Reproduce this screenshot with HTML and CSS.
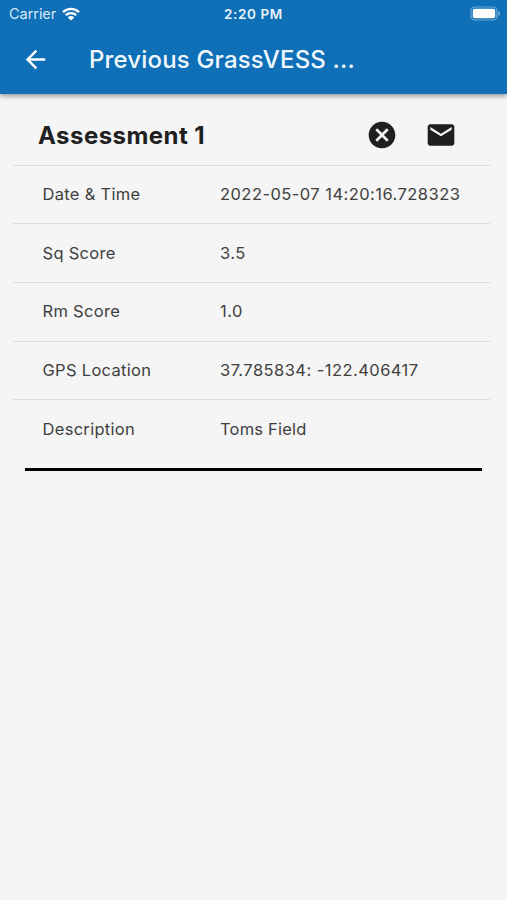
FILE: index.html
```html
<!DOCTYPE html>
<html lang="en">
<head>
    <meta charset="UTF-8">
    <meta name="viewport" content="width=device-width, initial-scale=1.0">
    <title>Previous GrassVESS Assessments</title>
    <link rel="stylesheet" href="styles.css">
</head>
<body>

<header class="app-header">
    <!-- Status bar -->
    <div class="status-bar">
        <div class="status-left">
            <span class="carrier">Carrier</span>
            <svg class="wifi" viewBox="0 0 18 14">
                <path d="M1 5.1a11.6 11.6 0 0 1 16 0M3.8 8.2a7.5 7.5 0 0 1 10.4 0" fill="none" stroke="#fff" stroke-width="2.3"/>
                <path d="M9 13.6 5.8 10.4a4.6 4.6 0 0 1 6.4 0z" fill="#fff"/>
            </svg>
        </div>
        <span class="clock">2:20 PM</span>
        <div class="status-right">
            <svg class="battery" viewBox="0 0 31 15">
                <rect x="1" y="1" width="26" height="13" rx="4" fill="none" stroke="#fff" stroke-opacity="0.4" stroke-width="1.2"/>
                <rect x="2.8" y="2.8" width="22.4" height="9.4" rx="2" fill="#fff"/>
                <path d="M28.4 5.2v4.6c1-.4 1.7-1.2 1.7-2.3s-.7-1.9-1.7-2.3z" fill="#fff" fill-opacity="0.5"/>
            </svg>
        </div>
    </div>

    <!-- Toolbar -->
    <div class="toolbar">
        <svg class="back-icon" viewBox="0 0 24 24">
            <path d="M20 11H7.83l5.59-5.59L12 4l-8 8 8 8 1.41-1.41L7.83 13H20v-2z"/>
        </svg>
        <h1 class="toolbar-title">Previous GrassVESS ...</h1>
    </div>
</header>

<main class="assessment">
    <div class="assessment-header">
        <h2 class="assessment-title">Assessment 1</h2>
        <svg class="action-icon" viewBox="0 0 24 24">
            <path d="M12 2C6.47 2 2 6.47 2 12s4.47 10 10 10 10-4.47 10-10S17.53 2 12 2zm5 13.59L15.59 17 12 13.41 8.41 17 7 15.59 10.59 12 7 8.41 8.41 7 12 10.59 15.59 7 17 8.41 13.41 12 17 15.59z"/>
        </svg>
        <svg class="action-icon" viewBox="0 0 24 24">
            <path d="M20 4H4c-1.1 0-1.99.9-1.99 2L2 18c0 1.1.9 2 2 2h16c1.1 0 2-.9 2-2V6c0-1.1-.9-2-2-2zm0 4l-8 5-8-5V6l8 5 8-5v2z"/>
        </svg>
    </div>

    <div class="row">
        <span class="label">Date &amp; Time</span>
        <span class="value numeric">2022-05-07 14:20:16.728323</span>
    </div>
    <div class="row">
        <span class="label">Sq Score</span>
        <span class="value numeric">3.5</span>
    </div>
    <div class="row">
        <span class="label">Rm Score</span>
        <span class="value numeric">1.0</span>
    </div>
    <div class="row">
        <span class="label">GPS Location</span>
        <span class="value numeric">37.785834: -122.406417</span>
    </div>
    <div class="row">
        <span class="label">Description</span>
        <span class="value">Toms Field</span>
    </div>

    <div class="divider"></div>
</main>

</body>
</html>
```
FILE: styles.css
```css
* {
    box-sizing: border-box;
}

body {
    font-family: Inter, "Liberation Sans", sans-serif;
    margin: 0;
    background-color: #f5f5f5;
    color: #3f3f3f;
}

.app-header {
    height: 94px;
    background-color: #0f70b7;
    color: #fff;
    box-shadow: 0 2px 5px rgba(0, 0, 0, 0.4);
}

.status-bar {
    display: grid;
    grid-template-columns: 1fr auto 1fr;
    align-items: center;
    height: 27px;
    padding: 0 7px 0 9px;
}

.status-left {
    display: flex;
    align-items: center;
    gap: 6px;
    margin-right: 2px;
}

.carrier {
    font-size: 14.5px;
    color: #d7e8f5;
    letter-spacing: -0.05px;
}

.wifi {
    width: 18px;
    height: 14px;
}

.clock {
    margin-left: -2px;
    font-size: 13.5px;
    font-weight: 600;
    letter-spacing: 0.6px;
    color: #e9f3fa;
}

.status-right {
    display: flex;
    justify-content: flex-end;
}

.battery {
    width: 31px;
    height: 15px;
    margin-right: -1px;
}

.toolbar {
    display: flex;
    align-items: center;
    height: 65px;
    padding-left: 21px;
}

.back-icon {
    width: 29px;
    height: 29px;
    fill: #fff;
}

.toolbar-title {
    margin: 0 0 0 39px;
    font-size: 24px;
    font-weight: 500;
    letter-spacing: 0.17px;
    white-space: nowrap;
    color: #f1f8fd;
}

.assessment {
    padding: 12px 17px 0 13px;
}

.assessment-header {
    display: flex;
    align-items: center;
    height: 58.5px;
    padding: 0 33px 0 25px;
}

.assessment-title {
    flex: 1;
    margin: 0;
    font-size: 24px;
    font-weight: 700;
    letter-spacing: 0.45px;
    color: #202020;
}

.action-icon {
    width: 32px;
    height: 32px;
    margin-left: 27px;
    fill: #1f1f1f;
}

.row {
    display: flex;
    align-items: center;
    height: 58.7px;
    padding: 0 0 1px 29.5px;
    border-top: 1px solid #dcdcdc;
    font-size: 16.5px;
    letter-spacing: 0.3px;
}

.label {
    width: 177.5px;
}

.value {
    white-space: nowrap;
    letter-spacing: 0.2px;
}

.numeric {
    letter-spacing: 0.45px;
}

.divider {
    height: 3px;
    margin: 10px 8px 0 12px;
    background-color: #000;
}
```
